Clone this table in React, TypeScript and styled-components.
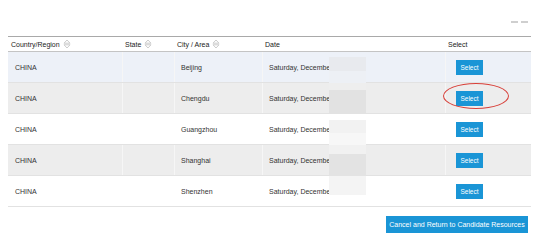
import React from "react";
import styled, { createGlobalStyle } from "styled-components";

const Global = createGlobalStyle`
  html, body { margin: 0; padding: 0; background: #fff; }
  body { font-family: "Liberation Sans", Arial, sans-serif; color: #333; }
`;

const Page = styled.div`
  width: 536px;
  height: 242px;
  display: flex;
  flex-direction: column;
  overflow: hidden;
`;

const TopBar = styled.div`
  height: 36px;
  display: flex;
  justify-content: flex-end;
  align-items: flex-start;
  padding: 21px 8px 0 0;
  box-sizing: border-box;
  gap: 3px;
`;

const Dash = styled.span`
  width: 7px;
  height: 1.5px;
  background: #cfcfcf;
`;

const Table = styled.div`
  margin-left: 8px;
  width: 523px;
  display: flex;
  flex-direction: column;
`;

const cols = "114px 52px 88px 183px 86px";

const HeaderRow = styled.div`
  display: grid;
  grid-template-columns: ${cols};
  height: 16px;
  border-top: 1px solid #a9a9a9;
  border-bottom: 1px solid #c4c4c4;
  box-sizing: border-box;
`;

const HeadCell = styled.div`
  display: flex;
  align-items: center;
  gap: 3px;
  padding-left: 3px;
  font-size: 7px;
  color: #222;
  white-space: nowrap;
`;

const Row = styled.div<{ $bg: string }>`
  display: grid;
  grid-template-columns: ${cols};
  height: 31px;
  background: ${(p) => p.$bg};
  border-bottom: 1px solid #e2e2e2;
  box-sizing: border-box;
`;

const Cell = styled.div<{ $shaded: boolean; $pad?: number }>`
  position: relative;
  display: flex;
  align-items: center;
  padding-left: ${(p) => p.$pad ?? 7}px;
  font-size: 7px;
  color: #333;
  white-space: nowrap;
  overflow: visible;
  border-left: 1px solid ${(p) => (p.$shaded ? "#f6f6f6" : "transparent")};
  &:first-child { border-left: none; }
`;

const Mask = styled.span<{ $top: number; $h: number; $c: string }>`
  position: absolute;
  left: 66px;
  width: 37px;
  top: ${(p) => p.$top}px;
  height: ${(p) => p.$h}px;
  background: ${(p) => p.$c};
`;

const SelectBtn = styled.button`
  width: 27px;
  height: 15px;
  padding: 0;
  border: none;
  background: #1a95d6;
  color: #fff;
  font-family: "Liberation Sans", Arial, sans-serif;
  font-size: 6.5px;
`;

const Circle = styled.span`
  position: absolute;
  left: -3px;
  top: 0px;
  width: 64px;
  height: 24px;
  border: 1.6px solid #d8403a;
  border-radius: 50%;
  pointer-events: none;
`;

const Footer = styled.div`
  display: flex;
  justify-content: flex-end;
  padding: 9px 8px 0 0;
`;

const CancelBtn = styled.button`
  height: 17px;
  width: 142px;
  padding: 0;
  border: none;
  background: #1a95d6;
  color: #fff;
  font-family: "Liberation Sans", Arial, sans-serif;
  font-size: 7px;
  white-space: nowrap;
`;

const SortIcon = () => (
  <svg width="8" height="10" viewBox="0 0 8 10" fill="none" stroke="#c6c6c6" strokeWidth="0.9">
    <path d="M1 4.2 L4 1 L7 4.2 Z" />
    <path d="M1 5.8 L4 9 L7 5.8 Z" />
  </svg>
);

const rows = [
  { city: "Beijing", bg: "#edf1f8", shaded: true, masks: [{ t: 5, h: 14, c: "#e8eaee" }, { t: 19, h: 12, c: "#edf0f5" }] },
  { city: "Chengdu", bg: "#ededed", shaded: true, masks: [{ t: 0, h: 7, c: "#eeeeee" }, { t: 7, h: 24, c: "#e2e2e2" }], circled: true },
  { city: "Guangzhou", bg: "#ffffff", shaded: false, masks: [{ t: 6, h: 13, c: "#f2f2f2" }, { t: 19, h: 12, c: "#f7f7f7" }] },
  { city: "Shanghai", bg: "#ededed", shaded: true, masks: [{ t: 0, h: 9, c: "#f1f1f1" }, { t: 9, h: 22, c: "#e3e3e3" }] },
  { city: "Shenzhen", bg: "#ffffff", shaded: false, masks: [{ t: 0, h: 19, c: "#f4f4f4" }] },
];

export default function App() {
  return (
    <Page>
      <Global />
      <TopBar>
        <Dash />
        <Dash />
      </TopBar>
      <Table>
        <HeaderRow>
          <HeadCell>Country/Region <SortIcon /></HeadCell>
          <HeadCell>State <SortIcon /></HeadCell>
          <HeadCell>City / Area <SortIcon /></HeadCell>
          <HeadCell>Date</HeadCell>
          <HeadCell>Select</HeadCell>
        </HeaderRow>
        {rows.map((r) => (
          <Row key={r.city} $bg={r.bg}>
            <Cell $shaded={r.shaded}>CHINA</Cell>
            <Cell $shaded={r.shaded} />
            <Cell $shaded={r.shaded} $pad={6}>{r.city}</Cell>
            <Cell $shaded={r.shaded} $pad={6}>
              Saturday, December
              {r.masks.map((m, i) => (
                <Mask key={i} $top={m.t} $h={m.h} $c={m.c} />
              ))}
            </Cell>
            <Cell $shaded={r.shaded} $pad={10}>
              <SelectBtn>Select</SelectBtn>
              {r.circled && <Circle />}
            </Cell>
          </Row>
        ))}
      </Table>
      <Footer>
        <CancelBtn>Cancel and Return to Candidate Resources</CancelBtn>
      </Footer>
    </Page>
  );
}
